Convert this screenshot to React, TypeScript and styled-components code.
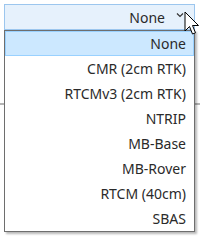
import React from "react";
import styled, { createGlobalStyle } from "styled-components";

const Global = createGlobalStyle`
  html, body { margin: 0; padding: 0; background: #ffffff; }
  body { width: 200px; height: 238px; overflow: hidden; font-family: "Noto Sans", "Open Sans", sans-serif; }
`;

const Page = styled.div`
  position: relative;
  width: 200px;
  height: 238px;
  padding-top: 4px;
  box-sizing: border-box;
`;

const Combo = styled.div`
  margin-left: 4px;
  width: 191px;
  height: 26px;
  box-sizing: border-box;
  border: 1px solid #9cc6ee;
  background: #e6f1fc;
  display: flex;
  align-items: center;
  justify-content: flex-end;
  padding-right: 10px;
  gap: 11px;
  font-size: 14px;
  color: #2a2a2a;
`;

const Chevron = styled.svg`
  width: 8px;
  height: 6px;
  margin-top: -4px;
`;

const Divider = styled.div`
  margin-top: 73px;
  height: 2px;
  background: #b4b4b4;
`;

const Popup = styled.ul`
  position: absolute;
  top: 30px;
  left: 4px;
  width: 191px;
  margin: 0;
  padding: 0;
  list-style: none;
  box-sizing: border-box;
  border: 1px solid #6e6e6e;
  background: #ffffff;
  box-shadow: 2px 2px 2px rgba(0, 0, 0, 0.28);
`;

const Item = styled.li<{ $selected?: boolean }>`
  height: 25px;
  box-sizing: border-box;
  display: flex;
  align-items: center;
  justify-content: flex-end;
  padding-right: 7px;
  font-size: 14px;
  color: #2a2a2a;
  background: ${(p) => (p.$selected ? "#cce8ff" : "transparent")};
  border: 1px solid ${(p) => (p.$selected ? "#99d1ff" : "transparent")};
`;

const Cursor = styled.svg`
  position: absolute;
  left: 184px;
  top: 11px;
  width: 16px;
  height: 28px;
`;

const options = [
  "None",
  "CMR (2cm RTK)",
  "RTCMv3 (2cm RTK)",
  "NTRIP",
  "MB-Base",
  "MB-Rover",
  "RTCM (40cm)",
  "SBAS",
];

export default function App() {
  return (
    <>
      <Global />
      <Page>
        <Combo>
          <span>None</span>
          <Chevron viewBox="0 0 8 6">
            <path d="M1 1.5 L4 4.5 L7 1.5" fill="none" stroke="#333" strokeWidth="1.2" />
          </Chevron>
        </Combo>
        <Divider />
        <Popup>
          {options.map((o, i) => (
            <Item key={o} $selected={i === 0}>
              {o}
            </Item>
          ))}
        </Popup>
        <Cursor viewBox="0 0 16 28">
          <path
            d="M1 1 L1 20 L5.5 15.5 L8.5 23 L11.5 21.8 L8.5 14.5 L14.5 14.5 Z"
            fill="#ffffff"
            stroke="#000000"
            strokeWidth="1"
            strokeLinejoin="miter"
          />
        </Cursor>
      </Page>
    </>
  );
}
